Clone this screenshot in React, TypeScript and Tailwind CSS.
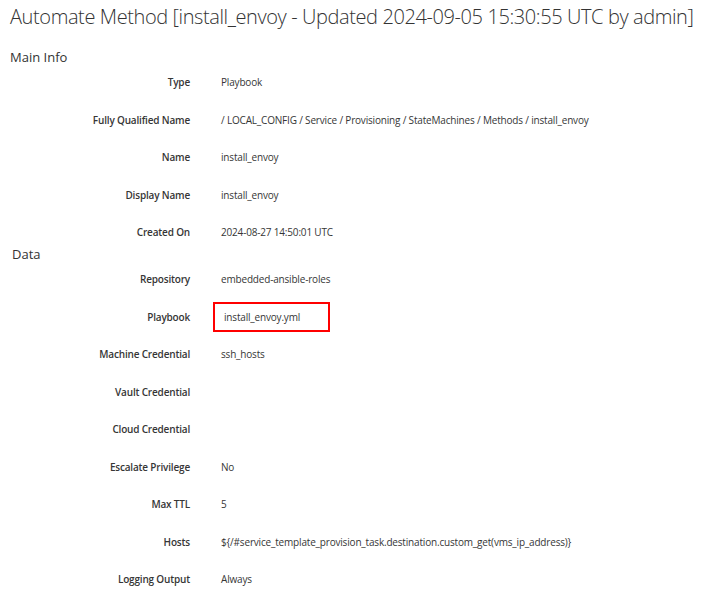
const mainInfo: [string, string][] = [
  ["Type", "Playbook"],
  ["Fully Qualified Name", "/ LOCAL_CONFIG / Service / Provisioning / StateMachines / Methods / install_envoy"],
  ["Name", "install_envoy"],
  ["Display Name", "install_envoy"],
  ["Created On", "2024-08-27 14:50:01 UTC"],
];

const data: [string, string][] = [
  ["Repository", "embedded-ansible-roles"],
  ["Playbook", "install_envoy.yml"],
  ["Machine Credential", "ssh_hosts"],
  ["Vault Credential", ""],
  ["Cloud Credential", ""],
  ["Escalate Privilege", "No"],
  ["Max TTL", "5"],
  ["Hosts", "${/#service_template_provision_task.destination.custom_get(vms_ip_address)}"],
  ["Logging Output", "Always"],
];

function Row({ label, value, highlight }: { label: string; value: string; highlight?: boolean }) {
  return (
    <div className="flex h-[37.5px] pt-[10.5px] text-[10px] leading-[15px] tracking-[-0.18px] text-[#363636]">
      <div className="w-[190px] shrink-0 text-right font-semibold">{label}</div>
      <div className="ml-[31px]">
        {highlight ? (
          <div className="-ml-[8px] -mt-[7.5px] h-[30px] w-[117px] border-2 border-[#ff0000] pl-[9px] pt-[5.5px]">
            {value}
          </div>
        ) : (
          value
        )}
      </div>
    </div>
  );
}

export default function App() {
  return (
    <div className="min-h-screen bg-white text-[#333] font-['Open_Sans',sans-serif]">
      <h1 className="pl-[10px] pt-[3px] text-[20px] leading-[28px] tracking-[-0.4px] font-light whitespace-nowrap">
        Automate Method [install_envoy - Updated 2024-09-05 15:30:55 UTC by admin]
      </h1>

      {/* Main Info */}
      <div className="mt-[18.5px]">
        <h3 className="pl-[10px] text-[13px] leading-[15px]">Main Info</h3>
        {mainInfo.map(([l, v]) => (
          <Row key={l} label={l} value={v} />
        ))}
      </div>

      {/* Data */}
      <div className="-mt-[5.5px]">
        <h3 className="pl-[12px] text-[13px] leading-[15px]">Data</h3>
        {data.map(([l, v]) => (
          <Row key={l} label={l} value={v} highlight={l === "Playbook"} />
        ))}
      </div>
    </div>
  );
}
